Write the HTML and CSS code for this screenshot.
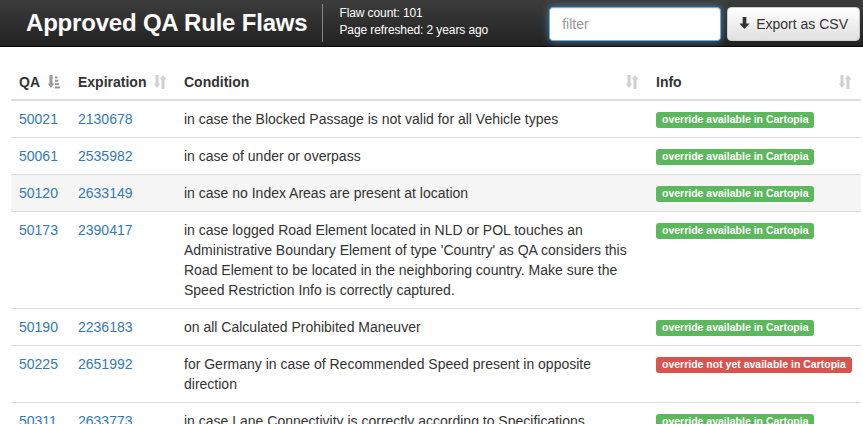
FILE: index.html
```html
<!DOCTYPE html>
<html>
<head>
<meta charset="utf-8">
<link rel="stylesheet" href="styles.css">
</head>
<body>
<header class="navbar">
  <h1 class="brand">Approved QA Rule Flaws</h1>
  <div class="divider"></div>
  <div class="stats">
    <div>Flaw count: 101</div>
    <div>Page refreshed: 2 years ago</div>
  </div>
  <div class="spacer"></div>
  <input class="filter" type="text" placeholder="filter">
  <button class="btn">
    <svg class="dl" viewBox="0 0 12 14" width="11" height="13"><path d="M4 0h4v7h3.5L6 13 0.5 7H4z" fill="#333"/></svg>
    <span>Export as CSV</span>
  </button>
</header>
<main class="content">
  <table class="table">
    <colgroup>
      <col class="c-qa"><col class="c-exp"><col class="c-cond"><col class="c-info">
    </colgroup>
    <thead>
      <tr>
        <th><span class="th-in">QA <svg class="sort active" viewBox="0 0 12 14" width="12" height="14"><path d="M1.5 0h3v8.5h1.8L3 13 -0.3 8.5h1.8z"/><rect x="7" y="1.5" width="2.5" height="2"/><rect x="7" y="4.8" width="3.3" height="2"/><rect x="7" y="8.1" width="4.1" height="2"/><rect x="7" y="11.4" width="5" height="2"/></svg></span></th>
        <th><span class="th-in">Expiration <svg class="sort" viewBox="0 0 12 14" width="12" height="14"><path d="M1.5 0h3v8.5h1.8L3 13 -0.3 8.5h1.8zM9 0l3.3 4.5h-1.8V14h-3V4.5H5.7z"/></svg></span></th>
        <th><span class="th-in">Condition <svg class="sort" viewBox="0 0 12 14" width="12" height="14"><path d="M1.5 0h3v8.5h1.8L3 13 -0.3 8.5h1.8zM9 0l3.3 4.5h-1.8V14h-3V4.5H5.7z"/></svg></span></th>
        <th><span class="th-in">Info <svg class="sort" viewBox="0 0 12 14" width="12" height="14"><path d="M1.5 0h3v8.5h1.8L3 13 -0.3 8.5h1.8zM9 0l3.3 4.5h-1.8V14h-3V4.5H5.7z"/></svg></span></th>
      </tr>
    </thead>
    <tbody>
      <tr><td><a href="#">50021</a></td><td><a href="#">2130678</a></td><td>in case the Blocked Passage is not valid for all Vehicle types</td><td><span class="label ok">override available in Cartopia</span></td></tr>
      <tr><td><a href="#">50061</a></td><td><a href="#">2535982</a></td><td>in case of under or overpass</td><td><span class="label ok">override available in Cartopia</span></td></tr>
      <tr class="hl"><td><a href="#">50120</a></td><td><a href="#">2633149</a></td><td>in case no Index Areas are present at location</td><td><span class="label ok">override available in Cartopia</span></td></tr>
      <tr><td><a href="#">50173</a></td><td><a href="#">2390417</a></td><td>in case logged Road Element located in NLD or POL touches an Administrative Boundary Element of type 'Country' as QA considers this Road Element to be located in the neighboring country. Make sure the Speed Restriction Info is correctly captured.</td><td><span class="label ok">override available in Cartopia</span></td></tr>
      <tr><td><a href="#">50190</a></td><td><a href="#">2236183</a></td><td>on all Calculated Prohibited Maneuver</td><td><span class="label ok">override available in Cartopia</span></td></tr>
      <tr><td><a href="#">50225</a></td><td><a href="#">2651992</a></td><td>for Germany in case of Recommended Speed present in opposite direction</td><td><span class="label bad">override not yet available in Cartopia</span></td></tr>
      <tr><td><a href="#">50311</a></td><td><a href="#">2633773</a></td><td>in case Lane Connectivity is correctly according to Specifications</td><td><span class="label ok">override available in Cartopia</span></td></tr>
    </tbody>
  </table>
</main>
</body>
</html>
```
FILE: styles.css
```css
* { box-sizing: border-box; }
html, body { margin: 0; padding: 0; }
body {
  font-family: "Liberation Sans", Arial, sans-serif;
  font-size: 14px;
  line-height: 20px;
  color: #333;
  background: #fff;
  overflow: hidden;
}
.navbar {
  display: flex;
  align-items: center;
  height: 47px;
  padding: 0 3px 0 26px;
  background: linear-gradient(#3c3c3c, #222);
  border-bottom: 1px solid #080808;
}
.brand {
  margin: 0;
  font-size: 24px;
  font-weight: bold;
  color: #fff;
  letter-spacing: -0.2px;
  line-height: 30px;
}
.divider {
  width: 1px;
  height: 38px;
  background: #888;
  margin-left: 15px;
}
.stats {
  margin-left: 16px;
  color: #fff;
  font-size: 12px;
  line-height: 17px;
  margin-top: -2px;
  letter-spacing: -0.1px;
}
.spacer { flex: 1; }
.filter {
  width: 172px;
  height: 34px;
  padding: 6px 12px;
  font-family: inherit;
  font-size: 14px;
  border: 1px solid #66afe9;
  border-radius: 4px;
  outline: none;
  box-shadow: inset 0 1px 1px rgba(0,0,0,.075), 0 0 8px rgba(102,175,233,.6);
  margin-top: 1px;
}
.filter::placeholder { color: #999; }
.btn {
  margin-left: 6px;
  height: 34px;
  padding: 6px 11px;
  display: flex;
  align-items: center;
  gap: 6px;
  white-space: nowrap;
  font-family: inherit;
  font-size: 14px;
  color: #333;
  background: linear-gradient(#fff, #e0e0e0);
  border: 1px solid #ccc;
  border-radius: 4px;
  margin-top: 1px;
  flex: none;
}
.content {
  padding: 17px 2px 0 11px;
}
.table {
  width: 850px;
  border-collapse: collapse;
  table-layout: fixed;
}
.c-qa { width: 59px; }
.c-exp { width: 106px; }
.c-cond { width: 472px; }
.c-info { width: 213px; }
.table th, .table td {
  padding: 8px;
  text-align: left;
  vertical-align: top;
}
.table th {
  font-weight: bold;
  border-bottom: 2px solid #ddd;
  padding-right: 10px;
  padding-bottom: 7px;
}
.th-in {
  display: flex;
  justify-content: space-between;
  align-items: center;
}
.sort { fill: #d0d0d0; flex: none; }
.sort.active { fill: #999; margin-left: 4px; }
.table td { border-top: 1px solid #ddd; }
.table tr.hl td { background: #f5f5f5; }
.table a { color: #337ab7; text-decoration: none; }
.label {
  display: inline-block;
  font-size: 10.5px;
  font-weight: bold;
  line-height: 1;
  color: #fff;
  padding: 2px 6px 3px;
  border-radius: 3px;
  white-space: nowrap;
  vertical-align: 1px;
}
.label.ok { background: #5cb85c; }
.label.bad { background: #d9534f; }
```
